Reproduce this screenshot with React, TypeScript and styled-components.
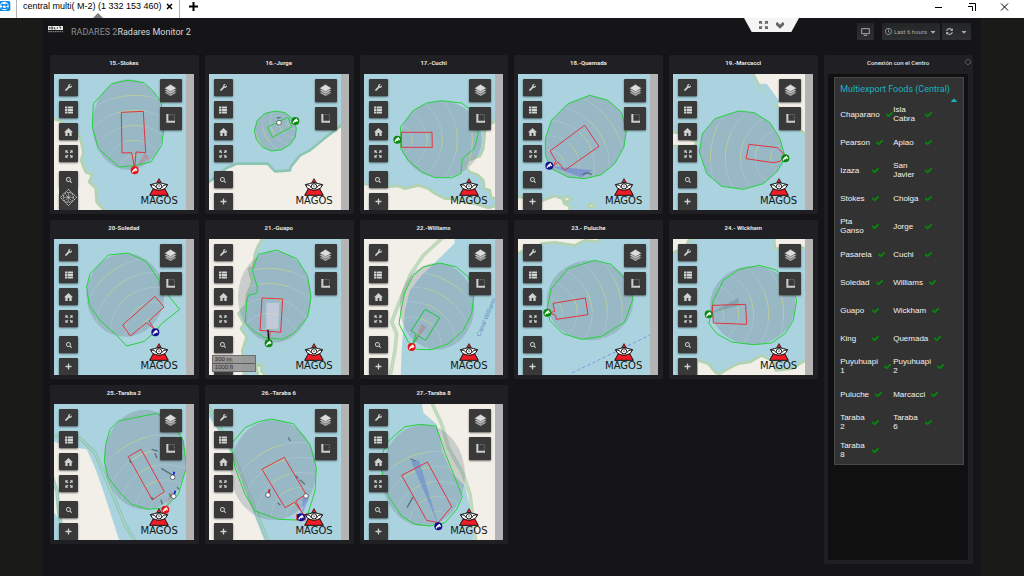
import React from "react";
import styled, { createGlobalStyle, css } from "styled-components";
import { FaWrench, FaThList, FaSearch, FaPlus, FaCheck, FaRegClock, FaSyncAlt, FaCaretDown, FaCaretUp } from "react-icons/fa";

const GlobalStyle = createGlobalStyle`
  * { box-sizing: border-box; }
  body { margin: 0; background: #1a1a19; color: #d8d9da; font-family: Roboto, "Liberation Sans", sans-serif; }
  button { font: inherit; color: inherit; border: 0; padding: 0; margin: 0; background: none; cursor: pointer; }
  h1, h2, ul { margin: 0; padding: 0; font-weight: 400; list-style: none; }
  svg { display: block; flex: none; }
`;

/* ---------- Remote session window ---------- */

const Screen = styled.div`
  display: flex;
  flex-direction: column;
  min-height: 100vh;
`;

const TitleBar = styled.header`
  position: relative;
  display: flex;
  align-items: stretch;
  height: 18px;
  background: #fff;
  color: #000;
`;

const AppLogo = styled.div`
  width: 17px;
  border-right: 1px solid #b4b4b4;
`;

const SessionTab = styled.div`
  position: relative;
  display: flex;
  align-items: center;
  justify-content: space-between;
  width: 163px;
  padding: 0 6px 5px;
  border-right: 1px solid #b4b4b4;
  font: 9px/13px "Liberation Sans", Arial, sans-serif;
  white-space: nowrap;

  &::after {
    content: "";
    position: absolute;
    left: 76px;
    bottom: 0;
    border: 5px solid transparent;
    border-top: 0;
    border-bottom-color: #7c7c7c;
  }
`;

const PlainButton = styled.button`
  display: flex;
  align-items: center;
  justify-content: center;
`;

const NewTab = styled(PlainButton)`
  width: 26px;
  padding-bottom: 5px;
`;

const WindowButtons = styled.div`
  display: flex;
  align-items: center;
  gap: 22px;
  margin-left: auto;
  padding: 0 15px 4px 0;
`;

const SessionHandle = styled.div`
  position: absolute;
  top: 18px;
  left: calc(75% - 24px);
  display: flex;
  justify-content: center;
  align-items: center;
  gap: 8px;
  width: 55px;
  height: 14px;
  background: #f4f4f4;
  clip-path: polygon(0 0, 100% 0, 86% 100%, 14% 100%);
`;

/* ---------- Dashboard ---------- */

const Dashboard = styled.main`
  flex: 1;
  margin: 0 43px 0 42px;
  padding: 0 8px 12px;
  background: #151517;
`;

const Toolbar = styled.div`
  display: flex;
  align-items: flex-start;
  height: 37px;
  padding: 5px 2px 0 0;
`;

const Brand = styled.h1`
  display: flex;
  align-items: center;
  height: 17px;
  font-size: 9px;
  line-height: 12px;
  color: #d8d9da;
  white-space: nowrap;

  svg { margin: 0 8px 4px -2px; }
  span { color: #8b8c8e; }
`;

const Actions = styled.div`
  display: flex;
  gap: 2px;
  margin-left: auto;
`;

const ToolButton = styled.button<{ $width: number; $apart?: boolean }>`
  display: flex;
  align-items: center;
  justify-content: center;
  gap: 2px;
  width: ${(p) => p.$width}px;
  height: 17px;
  margin-right: ${(p) => (p.$apart ? 6 : 0)}px;
  border-radius: 1px;
  background: linear-gradient(#242527, #2e2f31);
  color: #a9aaac;
  font-size: 6px;
  white-space: nowrap;
`;

const SplitButton = styled.div`
  display: flex;
`;

const Board = styled.div`
  display: grid;
  grid-template-columns: repeat(6, minmax(0, 1fr));
  gap: 6px;
`;

const Radars = styled.div`
  grid-column: span 5;
  align-self: start;
  display: grid;
  grid-template-columns: repeat(5, minmax(0, 1fr));
  gap: 6px;
`;

const panel = css`
  padding: 0 5px 4px 4px;
  background: #202024;
  border-radius: 2px;
`;

const Panel = styled.section`${panel}`;

const PanelTitle = styled.h2<{ $light?: boolean }>`
  height: 19px;
  padding-top: 3px;
  font-size: 6px;
  line-height: 10px;
  font-weight: ${(p) => (p.$light ? 500 : 700)};
  text-align: center;
  color: #e3e4e6;
  white-space: nowrap;
`;

const MapFrame = styled.div`
  display: flex;
  height: 136px;
  background: #b4b4b4;
`;

const MapView = styled.div`
  position: relative;
  flex: 1;
  overflow: hidden;
  background: #aad3df;
`;

const Terrain = styled.svg`
  width: 100%;
  height: 100%;
`;

const ScrollGutter = styled.div`
  width: 8px;
`;

const LeftTools = styled.div`
  position: absolute;
  top: 5px;
  left: 5px;
  display: grid;
  gap: 5px;
`;

const MapButton = styled.button<{ $large?: boolean; $apart?: boolean }>`
  display: flex;
  align-items: center;
  justify-content: center;
  width: ${(p) => (p.$large ? 22 : 19)}px;
  height: ${(p) => (p.$large ? 23 : 17)}px;
  margin-top: ${(p) => (p.$apart ? 4 : 0)}px;
  border-radius: 1px;
  background: #393939;
  color: #d2d2d2;
  box-shadow: 0 1px 2px rgba(0, 0, 0, 0.55);
`;

const RightTools = styled.div`
  position: absolute;
  top: 5px;
  right: 4px;
  display: grid;
  gap: 5px;
`;

const Maker = styled.div`
  position: absolute;
  right: 8px;
  bottom: 4px;
  display: flex;
  flex-direction: column;
  align-items: center;
  font: 10px/10px "DejaVu Sans", sans-serif;
  color: #161616;
`;

const Compass = styled.div`
  position: absolute;
  left: 5px;
  bottom: 0;
  display: flex;
  justify-content: center;
  align-items: center;
  width: 19px;
  height: 22px;
  padding-bottom: 4px;
  background: #393939;
`;

const ScaleBar = styled.div`
  position: absolute;
  left: 3px;
  bottom: 3px;
  width: 44px;
  border: 1px solid #6e6e6e;
  background: rgba(150, 150, 150, 0.93);
  font: 6px/7px "Liberation Sans", sans-serif;
  color: #333;

  div { padding-left: 2px; }
  div + div { border-top: 1px solid #5c5c5c; }
`;

/* ---------- Link status ---------- */

const StatusPanel = styled.aside`
  ${panel}
  position: relative;
  display: flex;
  flex-direction: column;
  min-height: 509px;
`;

const Spinner = styled.svg`
  position: absolute;
  top: 4px;
  right: 2px;
`;

const StatusBody = styled.div`
  flex: 1;
  padding: 3px 4px 3px 6px;
  background: #101010;
`;

const Card = styled.div`
  border: 1px solid #484848;
  background: #323232;
  padding: 5px 4px 0 5px;
  font-family: "Liberation Sans", Arial, sans-serif;
`;

const CardTitle = styled.h2`
  font: 9px/12px Roboto, sans-serif;
  color: #17b3c2;
  white-space: nowrap;
`;

const Collapse = styled(PlainButton)`
  height: 5px;
  margin: 0 0 0 auto;
  padding-top: 5px;
  color: #17b3c2;
`;

const Links = styled.ul`
  display: grid;
  grid-template-columns: 53px 1fr;
  grid-auto-rows: 28px;
`;

const LinkItem = styled.li`
  display: flex;
  align-items: center;
  gap: 6px;
  font-size: 8px;
  line-height: 9px;
  color: #f2f2f2;
  white-space: pre;

  span { min-width: 26px; }
  svg { color: #078a0a; stroke: #078a0a; stroke-width: 40px; }
`;

/* ---------- Map data ---------- */

type Mark = { x: number; y: number; c?: string };

type Site = {
  name: string;
  origin: [number, number];
  land: string[];
  water?: string[];
  coast?: string[];
  coastColor?: string;
  cover?: [number, number, number, number];
  outline: string;
  cage: string;
  cageColor?: string;
  pin: [number, number, string];
  ring?: number;
  sector?: [string, string];
  tracks?: string[];
  dots?: Mark[];
  extra?: React.ReactNode;
  compass?: boolean;
  scale?: boolean;
};

const RED = "#e2353f";
const GREEN = "#25d23a";
const PIN_RED = "#e8131b";
const PIN_GREEN = "#0b8a10";
const PIN_BLUE = "#12128c";

const sites: Site[] = [
  {
    name: "15.-Stokes", origin: [27, 66],
    land: ["20,198 45,207 70,225 105,255 115,300 108,325 122,360 142,368 132,390 152,408 155,450 182,480 20,480"],
    cover: [250, 218, 108, 136],
    outline: "200,95 250,85 297,92 325,118 348,150 357,225 350,280 318,330 272,340 222,345 160,290 142,225 145,155",
    cage: "229,181 295,178 302,302 273,300 269,350 260,302 231,303", pin: [269, 355, PIN_RED],
    sector: ["270,350 300,302 313,318", "rgba(205,90,100,.3)"], compass: true,
  },
  {
    name: "16.-Jorge", origin: [27, 66],
    land: ["20,395 50,372 80,348 110,335 203,335 225,358 270,355 272,345 300,310 330,295 385,250 430,215 430,480 20,480"],
    coastColor: "#8cc5b4",
    outline: "226,177 255,182 278,200 289,228 286,255 270,278 245,293 215,297 188,286 169,262 163,235 172,205 195,184",
    cage: "202,226 264,196 276,224 217,256", cageColor: GREEN, pin: [286, 207, PIN_GREEN], ring: 25,
    tracks: ["231,198 242,196"], dots: [{ x: 237, y: 212 }],
  },
  {
    name: "17.-Cuchi", origin: [27, 66],
    land: [
      "20,395 90,405 130,402 150,410 190,400 220,410 240,425 270,440 300,440 330,452 360,455 400,468 430,460 430,480 20,480",
      "430,205 405,215 390,235 385,290 375,312 340,325 332,345 345,360 370,370 385,385 388,410 405,415 408,435 430,445",
    ],
    cover: [258, 262, 122, 115],
    outline: "137,225 175,175 215,153 257,146 320,153 355,180 370,245 358,290 322,320 318,365 290,377 240,377 200,360 160,325 137,290",
    cage: "139,241 231,241 232,286 139,286", pin: [127, 263, PIN_GREEN],
  },
  {
    name: "18.-Quemada", origin: [490, 66],
    land: [
      "484,435 530,436 560,447 600,432 625,440 628,455 645,463 645,480 484,480",
      "622,438 640,434 650,442 636,450", "700,458 715,455 720,464 706,468",
    ],
    outline: "705,130 760,145 800,180 815,235 808,285 780,335 740,368 690,380 640,375 590,350 572,310 572,260 590,205 640,155",
    cage: "586,297 690,220 733,283 630,355 610,330 596,342 604,326", pin: [584, 341, PIN_BLUE],
    sector: ["590,343 715,355 680,376", "rgba(90,110,215,.45)"], tracks: ["684,368 696,362 712,367"],
  },
  {
    name: "19.-Marcacci", origin: [24, 66],
    land: ["262,60 430,60 430,250 405,235 380,205 340,165 310,130 285,105", "18,240 60,245 72,260 95,268 88,284 18,282"],
    water: ["282,95 305,95 345,150 326,162"],
    outline: "220,177 268,182 315,212 345,260 361,318 335,360 295,395 235,412 170,403 125,365 103,300 112,245 150,200",
    cage: "252,277 337,287 361,310 345,328 325,332 243,320", pin: [361, 319, PIN_GREEN],
  },
  {
    name: "20-Soledad", origin: [27, 66], land: [], cover: [241, 234, 117, 125],
    outline: "190,114 250,108 303,133 342,190 345,205 404,277 350,320 330,345 298,373 245,387 215,355 165,310 133,265 125,210 135,170",
    cage: "330,238 357,270 312,312 331,340 305,317 256,357 233,324", pin: [331, 346, PIN_BLUE],
  },
  {
    name: "21.-Guapo", origin: [492, 66],
    land: [
      "486,60 655,60 640,85 630,110 625,150 612,155 622,195 606,235 603,262 580,290 597,320 588,335 605,360 592,400 597,480 486,480",
      "633,442 650,446 648,462 668,480 640,480",
    ],
    cover: [689, 240, 110, 137],
    outline: "640,112 695,99 755,125 787,175 798,238 788,300 745,350 712,367 660,362 630,345 601,318 605,255 610,235 636,228 637,210 622,160",
    cage: "651,243 713,246 707,346 645,340", pin: [671, 379, PIN_GREEN], scale: true,
    extra: <>
      <polygon points="664,257 703,257 700,335 664,335" fill="rgba(216,210,226,.65)" />
      <path d="M675 345L673 375" stroke={RED} strokeWidth="3" />
      <path d="M669 338L671 372" stroke="#111" strokeWidth="4" />
    </>,
  },
  {
    name: "22.-Williams", origin: [27, 66],
    land: ["20,60 300,60 298,80 200,175 165,220 150,280 145,330 140,400 137,480 20,480"],
    coast: ["265,60 205,115 165,175 135,250 110,315 125,350 120,400 105,480"],
    cover: [246, 268, 112, 130],
    outline: "255,138 305,150 340,180 357,230 350,290 325,340 280,380 230,398 185,397 160,375 132,320 140,270 150,225 175,175 205,150",
    cage: "210,277 254,302 212,370 190,356 170,388 184,350 168,342", cageColor: "#18c43a", pin: [170, 390, PIN_RED],
    sector: ["172,388 200,320 214,330", "rgba(180,110,120,.4)"],
    extra: <text x="375" y="360" transform="rotate(-67 375 360)" fontSize="19" fontStyle="italic" fontFamily="Liberation Sans" fill="#5d90c6">Canal Williams</text>,
  },
  {
    name: "23.- Puluche", origin: [490, 66],
    land: ["484,60 740,60 730,74 690,70 660,85 600,76 560,80 550,95 510,100 484,112"],
    cover: [706, 250, 130, 120],
    outline: "720,130 770,142 815,190 835,245 810,315 740,358 680,367 625,350 585,310 578,270 590,215 640,155",
    cage: "595,259 692,243 700,293 605,307 603,295 585,288 600,283", pin: [578, 287, PIN_GREEN],
    extra: <path d="M652 468L890 352" stroke="#7c94e4" strokeWidth="3" strokeDasharray="10 7" />,
  },
  {
    name: "24.- Wickham", origin: [954, 66],
    land: [
      "948,60 1022,60 1000,72 990,92 948,110", "1257,60 1360,60 1360,95 1320,88 1290,95 1260,95",
      "1025,430 1060,440 1080,465 1092,472 1120,455 1150,440 1185,435 1220,415 1260,435 1262,460 1310,455 1360,425 1360,480 1025,480",
    ],
    cover: [1193, 265, 128, 118],
    outline: "1212,145 1260,158 1300,185 1325,250 1315,310 1290,350 1250,378 1195,383 1130,375 1085,350 1062,320 1075,250 1105,190 1150,158",
    cage: "1072,265 1172,262 1175,322 1075,318", pin: [1061, 292, PIN_GREEN],
    sector: ["1068,288 1150,242 1152,266", "rgba(90,130,130,.35)"],
  },
  {
    name: "25.-Taraba 2", origin: [27, 69],
    land: ["20,180 80,198 125,205 150,260 175,330 220,470 225,484 50,484 45,420 20,385"],
    coast: ["20,165 60,165 105,172 150,215 190,310 240,430 272,484", "20,285 36,330 42,400 60,484"],
    coastColor: "#8cc5b4", cover: [300, 236, 123, 150],
    outline: "220,120 335,97 390,135 415,180 424,260 400,340 360,380 310,385 260,370 225,335 190,290 178,240 182,190 195,145",
    cage: "250,227 288,205 358,332 322,357", pin: [361, 386, PIN_RED],
    sector: ["361,380 378,330 392,345", "rgba(205,90,100,.3)"],
    tracks: ["320,205 338,210", "330,217 336,232", "349,262 380,281", "397,318 402,326", "348,356 352,370", "254,238 257,245", "372,338 380,350", "320,348 324,356"],
    dots: [{ x: 383, y: 289, c: "#1616d8" }, { x: 386, y: 346, c: "#1616d8" }],
  },
  {
    name: "26.-Taraba 6", origin: [492, 69],
    land: ["486,100 565,215 600,330 660,484 486,484"],
    coast: ["486,70 520,130 560,210 600,310 640,410 670,484"],
    coastColor: "#8cc5b4", cover: [685, 267, 128, 150],
    outline: "680,114 745,128 795,190 814,260 810,330 790,395 755,417 700,415 630,390 600,340 570,260 558,190 600,140 640,122",
    cage: "651,265 718,229 783,340 752,360 773,397 749,364 720,380", pin: [768, 409, PIN_BLUE],
    sector: ["772,400 772,350 792,352", "rgba(90,110,215,.4)"],
    tracks: ["730,170 736,180", "752,284 760,292", "764,296 780,310", "698,366 706,372"],
    dots: [{ x: 669, y: 342, c: "#e8131b" }, { x: 783, y: 345 }],
    extra: <path d="M754 399H782V418H754Z" fill={PIN_RED} />,
  },
  {
    name: "27.-Taraba 8", origin: [27, 69],
    land: ["200,60 430,60 430,484 355,484 350,400 330,315 290,275 262,210 245,130 205,95"],
    coast: ["228,60 260,130 280,200 325,280 345,340 362,484"],
    cover: [205, 283, 125, 152],
    outline: "150,137 195,130 243,135 270,215 322,347 305,385 270,425 225,435 180,430 140,405 100,345 80,270 85,210 100,180",
    cage: "140,283 217,243 290,377 250,425 215,418", pin: [250, 436, PIN_BLUE],
    sector: ["250,432 168,240 192,238", "rgba(90,120,215,.45)"],
    tracks: ["166,234 182,240", "174,348 156,380"],
  },
];

const arc = (x: number, y: number, r: number, mid: number, half: number) => {
  const at = (a: number) => `${(x + r * Math.cos(a)).toFixed(1)} ${(y + r * Math.sin(a)).toFixed(1)}`;
  return `M${at(mid - half)}A${r} ${r} 0 0 1 ${at(mid + half)}`;
};

const SiteMap = ({ site, id }: { site: Site; id: string }) => {
  const [ox, oy] = site.origin;
  const pts = site.outline.split(" ").map((p) => p.split(",").map(Number));
  const cx = pts.reduce((s, p) => s + p[0], 0) / pts.length;
  const cy = pts.reduce((s, p) => s + p[1], 0) / pts.length;
  const [px, py, pinColor] = site.pin;
  const dir = Math.atan2(cy - py, cx - px);
  const step = site.ring ?? 45;
  const rings = [1, 2, 3, 4, 5].map((n) => n * step);
  const fringe = site.coastColor ?? "#b3d2b0";
  const shape = site.cover
    ? <ellipse cx={site.cover[0]} cy={site.cover[1]} rx={site.cover[2]} ry={site.cover[3]} />
    : <polygon points={site.outline} />;
  return (
    <Terrain viewBox={`${ox} ${oy} 396 408`} preserveAspectRatio="xMinYMid slice" aria-hidden="true">
      <clipPath id={id}>{shape}</clipPath>
      {site.land.map((l) => (
        <polygon key={l} points={l} fill="#f2efe9" stroke={site.coast ? "none" : fringe} strokeWidth="8" strokeLinejoin="round" />
      ))}
      {site.water?.map((w) => <polygon key={w} points={w} fill="#aad3df" />)}
      {site.coast?.map((c) => (
        <g key={c} fill="none" strokeLinejoin="round">
          <polyline points={c} stroke={fringe} strokeWidth="11" opacity=".85" />
          <polyline points={c} stroke="#cfe2cc" strokeWidth="3" opacity=".6" />
        </g>
      ))}
      <g fill="rgba(112,124,140,.3)">{shape}</g>
      <g clipPath={`url(#${id})`} fill="none" strokeWidth="3">
        {rings.map((r) => <path key={r} d={arc(px, py, r, dir, 1.1)} stroke="rgba(200,222,222,.3)" />)}
        {rings.map((r) => <path key={-r} d={arc(px, py, r, dir, 0.24)} stroke="rgba(196,208,120,.6)" />)}
      </g>
      {site.sector && <polygon points={site.sector[0]} fill={site.sector[1]} />}
      <polygon points={site.outline} fill="none" stroke={GREEN} strokeWidth="3" />
      <polygon points={site.cage} fill="none" stroke={site.cageColor ?? RED} strokeWidth="3" />
      {site.tracks?.map((t) => <polyline key={t} points={t} fill="none" stroke="#46575c" strokeWidth="4" opacity=".75" />)}
      {site.extra}
      {site.dots?.map((d) => (
        <g key={d.x}>
          {d.c && <path d={`M${d.x + 2} ${d.y - 6}l3 -11`} stroke={d.c} strokeWidth="5" />}
          <circle cx={d.x} cy={d.y} r="7" fill="#fff" stroke="#333" strokeWidth="2" />
        </g>
      ))}
      <circle cx={px} cy={py} r="12" fill={pinColor} />
      <path d={`M${px - 7} ${py + 6}L${px - 2} ${py - 1}L${px + 3} ${py - 5}L${px + 7} ${py + 1}M${px - 2} ${py - 1}L${px + 3} ${py + 2}`} fill="none" stroke="#fff" strokeWidth="4" />
    </Terrain>
  );
};

/* ---------- Drawn icons ---------- */

const ExpandIcon = () => (
  <svg width="8" height="8" viewBox="0 0 24 24" fill="currentColor">
    <path d="M1 1h8L6.500 3.500 10 7 7 10 3.500 6.500 1 9zM23 1v8l-2.500-2.500L17 10l-3-3 3.500-3.500L15 1zM1 23v-8l2.500 2.500L7 14l3 3-3.500 3.500L9 23zM23 23h-8l2.500-2.500L14 17l3-3 3.500 3.500L23 15z" />
  </svg>
);

const HomeIcon = () => (
  <svg width="9" height="8" viewBox="0 0 27 24" fill="currentColor">
    <path d="M13.500 0L27 13H23V24H16V15H11V24H4V13H0z" />
  </svg>
);

const LayersIcon = () => (
  <svg width="13" height="13" viewBox="0 0 39 39" stroke="#393939" strokeWidth="1.500" strokeLinejoin="round">
    <path d="M19.500 17L38 26 19.500 37 1 26z" fill="#a9a9a9" />
    <path d="M19.500 10L38 19.500 19.500 30 1 19.500z" fill="#c4c4c4" />
    <path d="M19.500 1L38 12.500 19.500 23 1 12.500z" fill="#dcdcdc" />
  </svg>
);

const MeasureIcon = () => (
  <svg width="9" height="9" viewBox="0 0 27 27" fill="none">
    <path d="M2 2H25V25" stroke="#999" strokeWidth="2" strokeDasharray="3 2" />
    <path d="M4 0V23H27" stroke="#d4d4d4" strokeWidth="6" />
    <path d="M3 4V24H24" stroke="#777" strokeWidth="1" strokeDasharray="2 3" />
  </svg>
);

const EyeLogo = () => (
  <svg width="20" height="18" viewBox="0 0 60 54">
    <path d="M30 0L40 17H20z" fill="#1a1a1a" />
    <path d="M30 4L35 12H25z" fill="#ee1c25" />
    <path d="M13 32L2 52H58L47 32z" fill="#ee1c25" stroke="#111" strokeWidth="3" />
    <path d="M4 20L16 17Q30 10 44 17L56 20L49 31Q40 36 30 37Q20 36 11 31z" fill="#fff" stroke="#111" strokeWidth="3" />
    <path d="M5 21Q18 19 21 29M55 21Q42 19 39 29" fill="none" stroke="#111" strokeWidth="3" />
    <circle cx="30" cy="25" r="8" fill="#fff" stroke="#111" strokeWidth="3" />
    <circle cx="30" cy="25" r="3" fill="#888" />
  </svg>
);

const leftTools = [
  { label: "Settings", icon: <FaWrench size={7} /> },
  { label: "List", icon: <FaThList size={8} /> },
  { label: "Home", icon: <HomeIcon /> },
  { label: "Fit", icon: <ExpandIcon /> },
  { label: "Search", icon: <FaSearch size={6} />, apart: true },
  { label: "Zoom in", icon: <FaPlus size={7} /> },
];

const RadarPanel = ({ site, index }: { site: Site; index: number }) => (
  <Panel>
    <PanelTitle>{site.name}</PanelTitle>
    <MapFrame>
      <MapView>
        <SiteMap site={site} id={`cover-${index}`} />
        <LeftTools>
          {leftTools.map((t) => (
            <MapButton key={t.label} type="button" aria-label={t.label} $apart={t.apart}>{t.icon}</MapButton>
          ))}
        </LeftTools>
        <RightTools>
          <MapButton type="button" aria-label="Layers" $large><LayersIcon /></MapButton>
          <MapButton type="button" aria-label="Measure" $large><MeasureIcon /></MapButton>
        </RightTools>
        <Maker><EyeLogo />MAGOS</Maker>
        {site.compass && (
          <Compass>
            <svg width="17" height="17" viewBox="0 0 51 51" fill="none" stroke="#e8e8e8" strokeWidth="2.500">
              <path d="M25 1L50 25 25 50 1 25z" strokeDasharray="6 2" />
              <circle cx="25" cy="25" r="15" strokeDasharray="5 3" />
              <path d="M25 10V40M10 25H40M17 17L33 33M33 17L17 33" strokeWidth="1.500" />
            </svg>
          </Compass>
        )}
        {site.scale && <ScaleBar><div>300 m</div><div>1000 ft</div></ScaleBar>}
      </MapView>
      <ScrollGutter />
    </MapFrame>
  </Panel>
);

const links = [
  "Chaparano", "Isla\nCabra", "Pearson", "Apiao", "Izaza", "San\nJavier", "Stokes", "Cholga", "Pta\nGanso", "Jorge",
  "Pasarela", "Cuchi", "Soledad", "Williams", "Guapo", "Wickham", "King", "Quemada", "Puyuhuapi\n1", "Puyuhuapi\n2",
  "Puluche", "Marcacci", "Taraba\n2", "Taraba\n6", "Taraba\n8",
];

export default function App() {
  return (
    <Screen>
      <GlobalStyle />
      <TitleBar>
        <AppLogo>
          <svg width="11" height="12" viewBox="0 0 33 36">
            <path d="M0 3H26Q31 3 31 8V28Q31 33 26 33H0z" fill="#0b8be8" />
            <circle cx="13" cy="18" r="13" fill="#fff" />
            <path d="M2 15L9 9V13H17V9L25 15 17 20V17H9V20zM2 24L9 19V23H18V19L25 24 18 29V27H9V29z" fill="#1583dd" />
          </svg>
        </AppLogo>
        <SessionTab>
          central multi( M-2) (1 332 153 460)
          <PlainButton type="button" aria-label="Close tab">
            <svg width="7" height="7" viewBox="0 0 7 7"><path d="M1 1L6 6M6 1L1 6" stroke="#000" strokeWidth="1.500" /></svg>
          </PlainButton>
        </SessionTab>
        <NewTab type="button" aria-label="New tab">
          <svg width="9" height="9" viewBox="0 0 9 9"><path d="M4.500 0V9M0 4.500H9" stroke="#000" strokeWidth="2" /></svg>
        </NewTab>
        <WindowButtons>
          <PlainButton type="button" aria-label="Minimize">
            <svg width="12" height="8" viewBox="0 0 12 8"><path d="M3 4.500H10" stroke="#000" /></svg>
          </PlainButton>
          <PlainButton type="button" aria-label="Restore">
            <svg width="12" height="8" viewBox="0 0 12 8" fill="none" stroke="#000"><path d="M3 .5H9.500V8M2 3.500H6.500V8" /></svg>
          </PlainButton>
          <PlainButton type="button" aria-label="Close">
            <svg width="9" height="8" viewBox="0 0 9 8"><path d="M1 .5L8 7.500M8 .5L1 7.500" stroke="#000" /></svg>
          </PlainButton>
        </WindowButtons>
        <SessionHandle>
          <PlainButton type="button" aria-label="Full screen">
            <svg width="9" height="8" viewBox="0 0 27 24" fill="none" stroke="#666" strokeWidth="4">
              <path d="M2 8V2H9M2 2L9 8M25 8V2H18M25 2L18 8M2 16V22H9M2 22L9 16M25 16V22H18M25 22L18 16" />
            </svg>
          </PlainButton>
          <PlainButton type="button" aria-label="Show toolbar">
            <svg width="8" height="7" viewBox="0 0 24 21"><path d="M0 3L4 0 12 8 20 0 24 3V9L12 20 0 9z" fill="#666" /></svg>
          </PlainButton>
        </SessionHandle>
      </TitleBar>

      <Dashboard>
        <Toolbar>
          <Brand>
            <svg width="15" height="7" viewBox="0 0 45 21">
              <path d="M0 0H45V12H0z" fill="#e9e9e9" />
              <path d="M4 3V9M9 3H14V9H9zM19 3V9H23M28 3V9M33 3H38V9" fill="none" stroke="#222" strokeWidth="2" />
              <path d="M0 17H45" stroke="#999" strokeWidth="3" strokeDasharray="5 2" />
            </svg>
            <span>RADARES 2</span>Radares Monitor 2
          </Brand>
          <Actions>
            <ToolButton type="button" aria-label="Cycle view" $width={17} $apart>
              <svg width="9" height="8" viewBox="0 0 27 24" fill="none" stroke="currentColor" strokeWidth="3"><path d="M2 2H25V17H2zM8 22H19" /></svg>
            </ToolButton>
            <ToolButton type="button" $width={58}>
              <FaRegClock size={7} />Last 6 hours<FaCaretDown size={8} />
            </ToolButton>
            <SplitButton>
              <ToolButton type="button" aria-label="Refresh" $width={15}><FaSyncAlt size={7} /></ToolButton>
              <ToolButton type="button" aria-label="Refresh interval" $width={14}><FaCaretDown size={8} /></ToolButton>
            </SplitButton>
          </Actions>
        </Toolbar>

        <Board>
          <Radars>
            {sites.map((s, i) => <RadarPanel key={s.name} site={s} index={i} />)}
          </Radars>
          <StatusPanel>
            <PanelTitle $light>Conexión con el Centro</PanelTitle>
            <Spinner width="6" height="6" viewBox="0 0 6 6" fill="none" stroke="#77787a"><circle cx="3" cy="3" r="2.500" strokeDasharray="2 1" /></Spinner>
            <StatusBody>
              <Card>
                <CardTitle>Multiexport Foods (Central)</CardTitle>
                <Collapse type="button" aria-label="Collapse"><FaCaretUp size={10} /></Collapse>
                <Links>
                  {links.map((l) => (
                    <LinkItem key={l}><span>{l}</span><FaCheck size={7} /></LinkItem>
                  ))}
                </Links>
              </Card>
            </StatusBody>
          </StatusPanel>
        </Board>
      </Dashboard>
    </Screen>
  );
}
